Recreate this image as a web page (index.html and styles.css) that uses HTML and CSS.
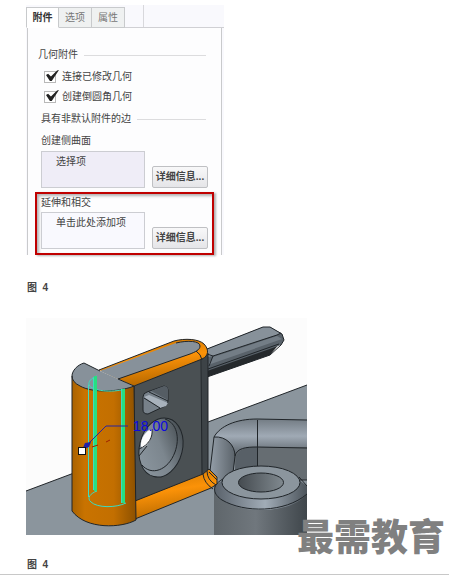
FILE: index.html
```
<!DOCTYPE html>
<html lang="zh-CN">
<head>
    <meta charset="UTF-8">
    <meta name="viewport" content="width=device-width, initial-scale=1.0">
    <title>附件选项卡</title>
    <link rel="stylesheet" href="styles.css">
</head>
<body>
    <main class="article">
        <figure class="figure">
            <form class="panel">
                <div class="tabs">
                    <button type="button" class="tab active">附件</button>
                    <button type="button" class="tab">选项</button>
                    <button type="button" class="tab">属性</button>
                    <span class="tab-end"></span>
                </div>
                <div class="panel-body">
                    <h2 class="section-title first">几何附件</h2>
                    <div class="check-row">
                        <input type="checkbox" id="connect" checked>
                        <label for="connect">连接已修改几何</label>
                    </div>
                    <div class="check-row">
                        <input type="checkbox" id="round" checked>
                        <label for="round">创建倒圆角几何</label>
                    </div>
                    <h2 class="section-title">具有非默认附件的边</h2>
                    <div class="collector">
                        <label for="side">创建侧曲面</label>
                        <div class="collector-row">
                            <textarea id="side" class="active" readonly>选择项</textarea>
                            <button type="button" class="details">详细信息...</button>
                        </div>
                    </div>
                    <div class="collector highlight">
                        <label for="extend">延伸和相交</label>
                        <div class="collector-row">
                            <textarea id="extend" readonly>单击此处添加项</textarea>
                            <button type="button" class="details">详细信息...</button>
                        </div>
                    </div>
                </div>
            </form>
            <figcaption>图&nbsp; 4</figcaption>
        </figure>

        <figure class="figure">
            <svg class="model" viewBox="26 318 281 217" role="img" aria-label="倒圆角几何模型">
                <defs>
                    <linearGradient id="cylinder">
                        <stop offset="0" stop-color="#a96200"/>
                        <stop offset=".2" stop-color="#c97300"/>
                        <stop offset=".65" stop-color="#c36f00"/>
                        <stop offset="1" stop-color="#8d5100"/>
                    </linearGradient>
                    <linearGradient id="edge" x1="0" y1="0" x2=".25" y2="1">
                        <stop offset="0" stop-color="#c77200"/>
                        <stop offset=".5" stop-color="#fb9208"/>
                        <stop offset="1" stop-color="#b96a00"/>
                    </linearGradient>
                    <linearGradient id="boss">
                        <stop offset="0" stop-color="#5f666b"/>
                        <stop offset=".45" stop-color="#70777d"/>
                        <stop offset="1" stop-color="#3f464b"/>
                    </linearGradient>
                    <linearGradient id="chamfer">
                        <stop offset="0" stop-color="#59616a"/>
                        <stop offset=".55" stop-color="#a1acb7"/>
                        <stop offset="1" stop-color="#4c545b"/>
                    </linearGradient>
                    <linearGradient id="bore">
                        <stop offset="0" stop-color="#454b50"/>
                        <stop offset="1" stop-color="#80898f"/>
                    </linearGradient>
                    <linearGradient id="pipe" x1="0" y1="0" x2="0" y2="1">
                        <stop offset="0" stop-color="#737c84"/>
                        <stop offset=".3" stop-color="#a0aab5"/>
                        <stop offset=".6" stop-color="#626a71"/>
                    </linearGradient>
                    <linearGradient id="leg">
                        <stop offset="0" stop-color="#949ea8"/>
                        <stop offset="1" stop-color="#5b636a"/>
                    </linearGradient>
                    <linearGradient id="hole" x1="0" y1="1" x2="1" y2="0">
                        <stop offset="0" stop-color="#8f9aa3"/>
                        <stop offset=".5" stop-color="#7c868e"/>
                        <stop offset="1" stop-color="#343a3e"/>
                    </linearGradient>
                </defs>
                <rect x="26" y="318" width="281" height="217" fill="#fcfcfc"/>

                <!-- base plate -->
                <path d="M26 491L74 473L208 422L307 385V535H26Z" fill="#8b959d"/>
                <path class="line" d="M26 491L74 473M208 422L307 385"/>

                <!-- bent pipe -->
                <path d="M235 447H307V480H235Z" fill="#666d72"/>
                <path d="M214 437C220 426 236 419 257 419L307 420V447H257C244 447 236 450 235 457L233 476L220 470Z" fill="url(#pipe)"/>
                <path d="M214 437C226 436 235 445 235 456L233 474L222 481L210 471Z" fill="url(#leg)"/>
                <path d="M236 456C240 448 247 447 257 447V466L235 471Z" fill="#586067"/>
                <path class="line" d="M210 471L214 437C220 426 236 419 257 419L307 420M214 437C226 436 235 445 235 456L233 473M235 456C237 448 246 447 257 447L307 448M257.500 420V466M300 480H307"/>

                <!-- round boss -->
                <path d="M214 488H307V535H214Z" fill="url(#boss)"/>
                <path d="M223 480L214 486C214 501 235 510 262 510C283 510 300 503 307 494V486L299 480Z" fill="url(#chamfer)"/>
                <path class="line" d="M223 479C210 486 214 495 222 500C244 513 285 513 307 494M299 477L307 486"/>
                <ellipse class="line face" cx="261" cy="482.500" rx="39" ry="16.500"/>
                <ellipse class="line bore" cx="261" cy="482.500" rx="22.500" ry="9.500"/>

                <!-- handle bar -->
                <path d="M207 368L280 343L270 355L207 377Z" fill="#25292c"/>
                <path d="M207 349L263 327L270 327L282 334L284 340L281 345L207 371Z" fill="#59626a"/>
                <path d="M207 349L263 327L270 327L281 333L277 335L213 356L207 357Z" fill="#87919a"/>
                <path d="M213 357L277 336L282 339L208 365Z" fill="#737d86"/>
                <path class="line" d="M207 349L263 327L270 327L282 334L284 340L281 345L270 355L207 377M213 356L277 335L281 333M208 369L279 344M207 354L213 356L209 366"/>

                <!-- upright block -->
                <path d="M134 386L201 358L208 352V474L134 502Z" fill="#4a5053"/>
                <path d="M202 358L208 353V472L202 474Z" fill="#3d4347"/>
                <path class="line" d="M134 386V502M201 360L202 474M208 353V470"/>
                <path d="M99 370L174 341C185 338 199 339 204 344C209 349 209 356 202 359L134 386L118 379Z" fill="url(#edge)"/>
                <path d="M100 371L176 343C188 340 200 341 200 346C200 350 195 352 190 354L118 379Z" fill="#87919a"/>
                <path class="line" d="M99 370L174 341C185 338 199 339 204 344C209 349 209 356 202 359L134 386M118 379L190 354C195 352 200 350 200 346C200 341 188 340 176 343M196 351Q201 354 202 360"/>

                <!-- slot -->
                <path class="line slot" d="M143 397Q143 393 147 392L164 386Q168 386 168 390V401Q168 404 165 406L148 414Q143 414 143 410Z"/>
                <path d="M151 391L164 386Q168 386 168 390V400Z" fill="#555d64"/>
                <path d="M144 397L149 395L168 403L166 406L160 408Z" fill="#a8b2bc"/>
                <path class="line" d="M144 398L160 408M149 392L168 401"/>

                <!-- through hole -->
                <ellipse class="line hole" cx="161" cy="447.500" rx="21.500" ry="30" transform="rotate(14 161 447.500)"/>
                <path class="line" d="M165 419C177 423 180 438 175 452C168 471 151 476 142 465"/>
                <path d="M141 446C140 439 146 430 152 429C153 437 149 445 142 448Z" fill="#fcfcfc"/>
                <path class="line" d="M152 429C153 437 149 445 139 449M147 446L139 456"/>

                <!-- lower fillet -->
                <path d="M135 501L203 474L209 469L217 477V484L211 488L135 519Z" fill="url(#edge)"/>
                <path class="line" d="M135 501L203 474L209 469L217 477V484L211 488L135 519M203 474Q204 483 213 489M207 471Q207 480 216 485M209 472L217 480"/>

                <!-- rounded end -->
                <path d="M72 376L134 386L136 520C122 528 86 530 72 511Z" fill="url(#cylinder)"/>
                <path d="M72 376C72 371 77 365 84 363L100 371L118 379L134 386C123 391 94 394 80 386Q72 382 72 376Z" fill="#87919a"/>
                <path class="line" d="M134 386C123 391 94 394 80 386Q72 382 72 376C72 371 77 365 84 363L100 371M118 379L134 386L136 520C122 528 86 530 72 511V376"/>

                <!-- preview of the round -->
                <path class="preview" d="M97 376C91 378 88 382 89 385C92 391 112 393 125 389M88.500 385V497M97 491C91 493 86 498 91 502C97 508 116 508 126 503"/>
                <path class="preview-strip" d="M95.500 376V491M123.500 389V503"/>
                <path class="preview" d="M93.500 378V490M121.500 389V503"/>

                <!-- dimension -->
                <path class="axis" d="M92 447L98 445M106 442L110 440"/>
                <path class="leader" d="M82 450L106 426H128"/>
                <path d="M82 450L85 443L91 442L89 447Z" fill="#2322a8"/>
                <rect x="78.500" y="447.500" width="7" height="7" fill="#fff" stroke="#111"/>
                <text class="dimension" x="133" y="431">18.00</text>
            </svg>
            <span class="watermark">最需教育</span>
            <figcaption>图&nbsp; 4</figcaption>
        </figure>
    </main>
</body>
</html>
```

FILE: styles.css
```
* {
    box-sizing: border-box;
}
body {
    margin: 0;
    background: #fff;
    color: #444;
    font-family: "Liberation Sans", "Noto Sans CJK SC", sans-serif;
    font-size: 10px;
    line-height: 20px;
}
.article {
    padding-top: 5px;
    border-bottom: 1px solid #c8c8c8;
}
.figure {
    position: relative;
    margin: 0 0 21px;
    padding-left: 26px;
}
.figure:last-child {
    margin-bottom: 0;
}
figcaption {
    padding: 24px 0 0 1px;
    font-weight: bold;
    line-height: 18px;
}
.model ~ figcaption {
    padding-top: 21px;
}
button, textarea {
    font: inherit;
    color: inherit;
}

/* dialog panel */
.panel {
    max-width: 198px;
    background: #f9f9fd;
}
.tabs {
    display: flex;
    padding-top: 2px;
    height: 23px;
    border-bottom: 1px solid #d0d0d4;
}
.tab {
    width: 33px;
    height: 21px;
    padding: 0;
    border: 1px solid #c8cacc;
    border-left-width: 0;
    background: #eff1f1;
    color: #777;
    line-height: 18px;
}
.tab.active {
    border-left-width: 1px;
    border-bottom-color: #fff;
    background: #fff;
    color: #333;
    font-weight: bold;
}
.tab-end {
    width: 19px;
    margin-top: -2px;
    border-right: 1px solid #d8d8dc;
}
.panel-body {
    margin: 0 2px 0 1px;
    padding: 17px 8px 0;
    border: 1px solid #c9cacc;
    border-width: 0 1px;
    background: #fdfdfe;
}
.section-title {
    display: flex;
    align-items: center;
    gap: 6px;
    margin: 0;
    padding: 2px 7px 1px 5px;
    font-size: 10px;
    font-weight: normal;
}
.section-title.first {
    padding: 0 7px 2px 2px;
}
.section-title::after {
    content: "";
    flex: 1;
    height: 1px;
    background: #dcdcde;
}
.check-row {
    display: flex;
    align-items: center;
    gap: 6px;
    padding-left: 8px;
}
.check-row input {
    appearance: none;
    position: relative;
    width: 12px;
    height: 12px;
    margin: 0;
    border: 1px solid #b8b8b8;
    background: #fff;
}
.check-row input:checked::before {
    content: "";
    position: absolute;
    left: 1px;
    top: -2px;
    width: 13px;
    height: 11px;
    background: #222;
    clip-path: polygon(0 45%, 16% 34%, 38% 60%, 85% 5%, 100% 0, 44% 100%, 30% 100%);
}
.collector {
    padding: 0 4px 3px;
    border: 1px solid transparent;
}
.collector label {
    display: block;
}
.collector-row {
    display: flex;
    align-items: flex-end;
    gap: 7px;
}
.collector textarea {
    display: block;
    flex: 1;
    min-width: 0;
    height: 37px;
    padding: 0 14px;
    border: 1px solid #cccdd2;
    border-radius: 0;
    background: #f9f9fe;
    resize: none;
    overflow: hidden;
}
.collector textarea.active {
    background: #efedf7;
}
.details {
    width: 56px;
    height: 22px;
    padding: 0;
    border: 1px solid #bfc0c3;
    border-radius: 2px;
    background: linear-gradient(#f8f8f9, #e5e5e8);
    font-weight: bold;
    line-height: 18px;
}
.collector.highlight {
    margin: 0 -1px;
    padding: 0 4px 4px;
    border: 2px solid #c00000;
    box-shadow: 2px 1px 2px rgba(0, 0, 0, 0.3), inset 2px 2px 3px rgba(0, 0, 0, 0.3);
}
.highlight label {
    line-height: 18px;
}

/* 3D model */
.model {
    display: block;
    width: 100%;
    max-width: 281px;
}
.line {
    fill: none;
    stroke: #202529;
    stroke-width: 1;
}
.face {
    fill: #8b959d;
}
.bore {
    fill: url(#bore);
}
.slot {
    fill: #77818a;
}
.hole {
    fill: url(#hole);
}
.preview {
    fill: none;
    stroke: #3cdcc0;
}
.preview-strip {
    fill: none;
    stroke: #27df80;
    stroke-width: 3;
}
.axis {
    stroke: #a02000;
}
.leader {
    fill: none;
    stroke: #2824a0;
}
.dimension {
    fill: #0c08e0;
    font-family: "Liberation Sans", sans-serif;
    font-size: 14px;
}
.watermark {
    position: absolute;
    left: 297px;
    bottom: 19px;
    color: #808080;
    font-family: "Noto Sans CJK SC", sans-serif;
    font-size: 37px;
    font-weight: 900;
    line-height: 40px;
}
```
